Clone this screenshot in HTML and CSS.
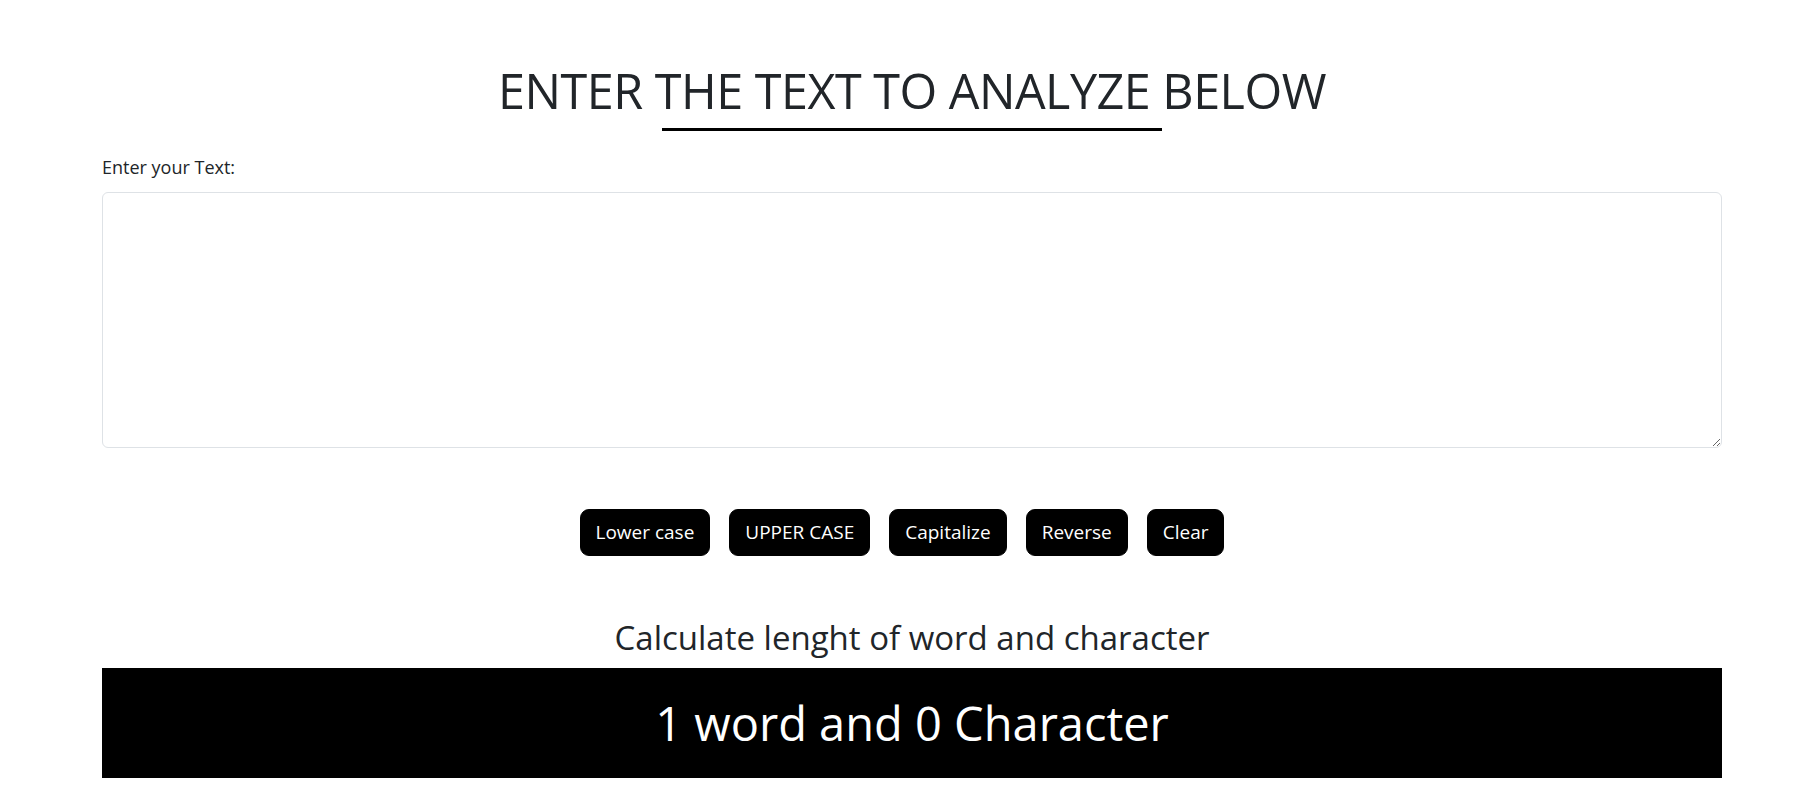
FILE: index.html
```html
<!DOCTYPE html>
<html lang="en">
<head>
<meta charset="utf-8">
<title>Text Analyzer</title>
<link rel="stylesheet" href="styles.css">
</head>
<body>
<main class="container">
  <h1 class="title">ENTER THE TEXT TO ANALYZE BELOW</h1>
  <div class="title-rule"></div>
  <label class="field-label" for="text">Enter your Text:</label>
  <textarea id="text" class="text-input"></textarea>
  <div class="actions">
    <button class="btn">Lower case</button>
    <button class="btn">UPPER CASE</button>
    <button class="btn">Capitalize</button>
    <button class="btn">Reverse</button>
    <button class="btn">Clear</button>
  </div>
  <h2 class="subtitle">Calculate lenght of word and character</h2>
  <div class="result">1 word and 0 Character</div>
</main>
</body>
</html>
```

FILE: styles.css
```css
html, body {
  margin: 0;
  padding: 0;
  background: #fff;
}
body {
  font-family: "Open Sans", "Noto Sans", sans-serif;
  color: #212529;
}
.container {
  width: 1620px;
  margin-left: 102px;
  display: flex;
  flex-direction: column;
}
.title {
  margin: 61px 0 0;
  font-size: 48.5px;
  font-weight: 400;
  line-height: 1.2;
  text-align: center;
  letter-spacing: -0.5px;
}
.title-rule {
  width: 500px;
  height: 3px;
  background: #000;
  margin: 9px auto 0;
}
.field-label {
  margin-top: 24px;
  font-size: 18px;
  line-height: 24px;
}
.text-input {
  margin-top: 13px;
  height: 256px;
  box-sizing: border-box;
  border: 1px solid #dee2e6;
  border-radius: 6px;
  resize: vertical;
  font-family: inherit;
  font-size: 16px;
  padding: 6px 12px;
}
.actions {
  display: flex;
  justify-content: center;
  gap: 19px;
  margin-top: 61px;
  padding-right: 20px;
}
.btn {
  background: #000;
  color: #fff;
  border: 1px solid #000;
  border-radius: 9px;
  font-family: inherit;
  font-size: 19px;
  line-height: 27px;
  padding: 9px 15px;
  cursor: pointer;
}
.subtitle {
  margin: 62px 0 0;
  font-size: 33px;
  font-weight: 400;
  line-height: 1.2;
  text-align: center;
}
.result {
  margin-top: 10px;
  height: 110px;
  background: #000;
  color: #fff;
  font-size: 47px;
  display: flex;
  align-items: center;
  justify-content: center;
}
```
